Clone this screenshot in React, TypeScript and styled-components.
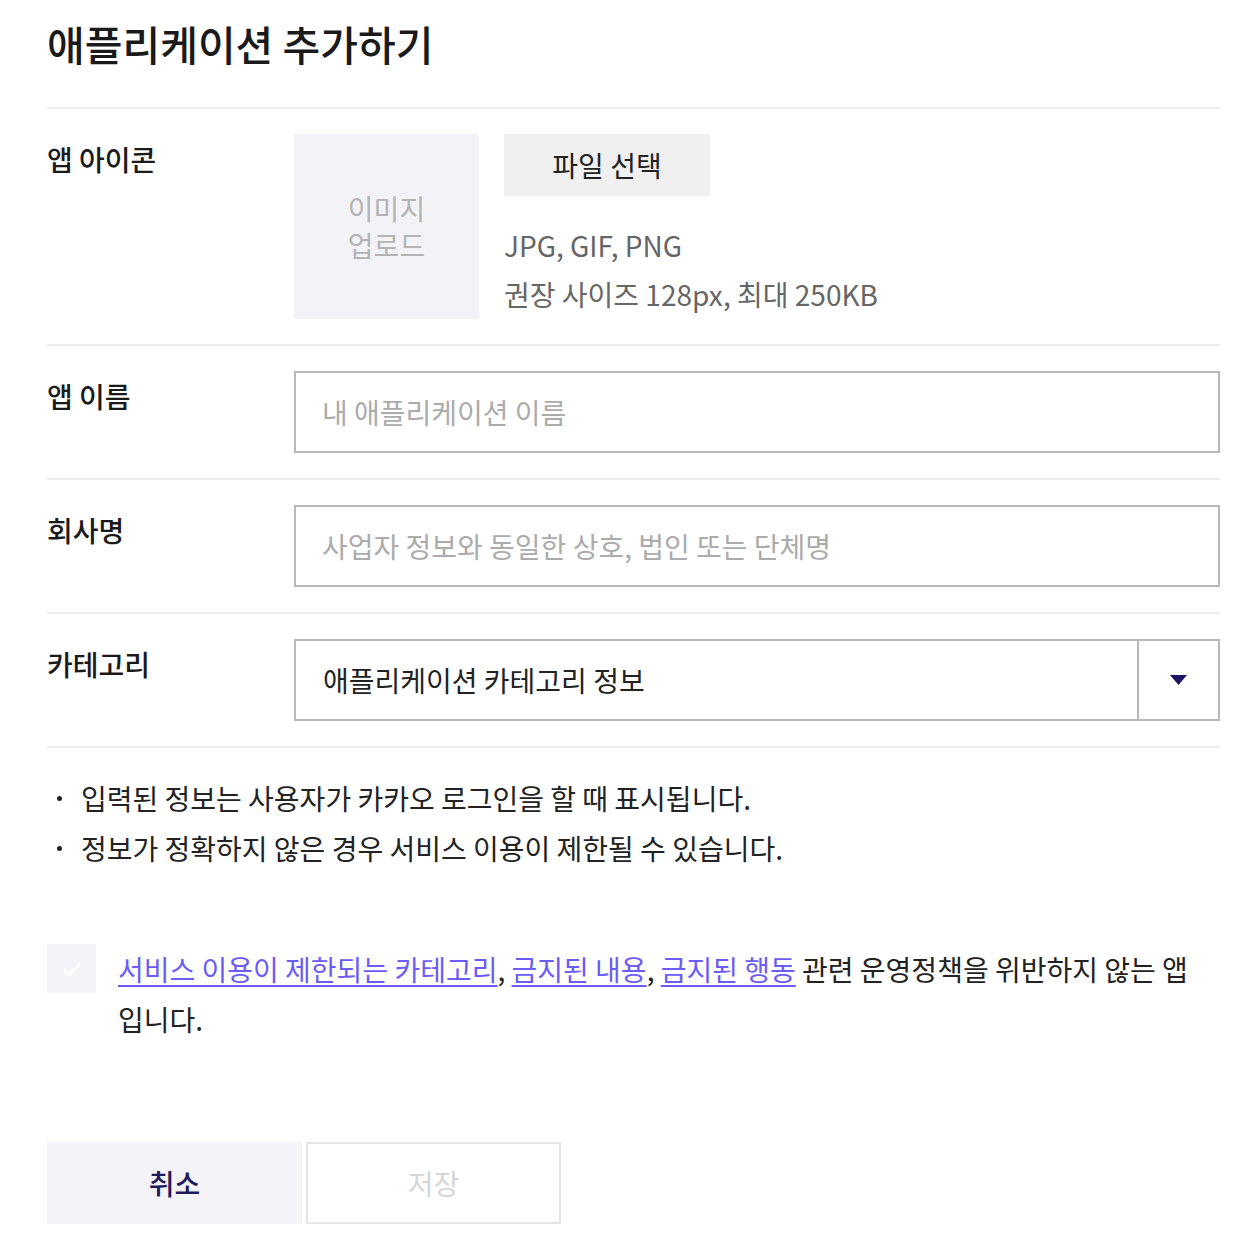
import * as React from 'react';
import styled, { createGlobalStyle } from 'styled-components';

const GlobalStyle = createGlobalStyle`
    body {
        margin: 0;
        background: #fff;
        font-family: "Noto Sans CJK KR", "Noto Sans", sans-serif;
        color: #222;
        word-break: keep-all;
    }
`;

const Page = styled.div`
    padding: 16px 25px 20px 47px;
`;

const Title = styled.h1`
    margin: 0 0 37px;
    font-size: 41px;
    line-height: 54px;
    font-weight: 500;
    color: #1a1a1a;
`;

const Row = styled.div`
    display: grid;
    grid-template-columns: 247px 1fr;
    border-top: 2px solid #ebebeb;
    padding: 25px 0;
`;

const Label = styled.div`
    font-size: 28px;
    line-height: 50px;
    font-weight: 500;
    color: #1a1a1a;
`;

const IconField = styled.div`
    display: flex;
    gap: 25px;
`;

const ImageBox = styled.div`
    width: 185px;
    height: 185px;
    background: #f3f3f7;
    color: #b3b3b3;
    font-size: 28px;
    line-height: 37px;
    display: flex;
    align-items: center;
    justify-content: center;
    text-align: center;
`;

const FileInfo = styled.div`
    display: flex;
    flex-direction: column;
    align-items: flex-start;
`;

const FileButton = styled.button`
    width: 206px;
    height: 62px;
    border: 0;
    background: #f0f0f0;
    font-family: inherit;
    font-size: 28px;
    color: #222;
    padding: 0;
`;

const Hint = styled.div`
    margin-top: 25px;
    font-size: 28px;
    line-height: 49px;
    color: #666;
`;

const TextInput = styled.input`
    box-sizing: border-box;
    width: 100%;
    height: 82px;
    border: 2px solid #b8b8b8;
    padding: 0 26px;
    font-family: inherit;
    font-size: 28px;
    color: #222;
    outline: none;
    &::placeholder {
        color: #ababab;
    }
`;

const Select = styled.div`
    box-sizing: border-box;
    display: flex;
    height: 82px;
    border: 2px solid #b8b8b8;
`;

const SelectValue = styled.div`
    flex: 1;
    display: flex;
    align-items: center;
    padding: 0 27px;
    font-size: 28px;
    color: #222;
`;

const SelectArrow = styled.div`
    width: 79px;
    border-left: 2px solid #b8b8b8;
    display: flex;
    align-items: center;
    justify-content: center;
`;

const Notes = styled.ul`
    margin: 0;
    padding: 25px 0 0;
    list-style: none;
    border-top: 2px solid #ebebeb;
`;

const Note = styled.li`
    position: relative;
    padding-left: 34px;
    font-size: 28px;
    line-height: 50px;
    color: #222;
    &::before {
        content: '';
        position: absolute;
        left: 10px;
        top: 23px;
        width: 5px;
        height: 5px;
        border-radius: 50%;
        background: #222;
    }
`;

const Agree = styled.div`
    display: flex;
    gap: 22px;
    margin-top: 71px;
`;

const CheckBox = styled.div`
    flex: none;
    width: 49px;
    height: 49px;
    background: #f3f3f8;
    display: flex;
    align-items: center;
    justify-content: center;
`;

const AgreeText = styled.p`
    margin: 0;
    font-size: 28px;
    line-height: 50px;
    color: #222;
`;

const PolicyLink = styled.a`
    color: #6b5cf6;
    text-decoration: underline;
    text-underline-offset: 4px;
`;

const Actions = styled.div`
    display: flex;
    gap: 4px;
    margin-top: 98px;
`;

const ActionButton = styled.button<{ $primary?: boolean }>`
    box-sizing: border-box;
    width: 255px;
    height: 82px;
    font-family: inherit;
    font-size: 28px;
    font-weight: ${p => (p.$primary ? 500 : 400)};
    background: ${p => (p.$primary ? '#f3f3f8' : '#fff')};
    color: ${p => (p.$primary ? '#1e1a5c' : '#d6d6d6')};
    border: ${p => (p.$primary ? '0' : '2px solid #e5e5e5')};
    padding: 0;
`;

const ArrowIcon = () => (
    <svg width="17" height="10" viewBox="0 0 17 10">
        <path d="M0 0 H17 L8.5 10 Z" fill="#1c1464" />
    </svg>
);

const CheckIcon = () => (
    <svg width="24" height="20" viewBox="0 0 24 20">
        <path d="M3 10 L9 16 L21 4" fill="none" stroke="#fff" strokeWidth="3.5" />
    </svg>
);

export default function App() {
    return (
        <Page>
            <GlobalStyle />
            <Title>애플리케이션 추가하기</Title>

            <Row>
                <Label>앱 아이콘</Label>
                <IconField>
                    <ImageBox>이미지<br />업로드</ImageBox>
                    <FileInfo>
                        <FileButton>파일 선택</FileButton>
                        <Hint>
                            JPG, GIF, PNG<br />
                            권장 사이즈 128px, 최대 250KB
                        </Hint>
                    </FileInfo>
                </IconField>
            </Row>

            <Row>
                <Label>앱 이름</Label>
                <TextInput placeholder="내 애플리케이션 이름" />
            </Row>

            <Row>
                <Label>회사명</Label>
                <TextInput placeholder="사업자 정보와 동일한 상호, 법인 또는 단체명" />
            </Row>

            <Row>
                <Label>카테고리</Label>
                <Select>
                    <SelectValue>애플리케이션 카테고리 정보</SelectValue>
                    <SelectArrow><ArrowIcon /></SelectArrow>
                </Select>
            </Row>

            <Notes>
                <Note>입력된 정보는 사용자가 카카오 로그인을 할 때 표시됩니다.</Note>
                <Note>정보가 정확하지 않은 경우 서비스 이용이 제한될 수 있습니다.</Note>
            </Notes>

            <Agree>
                <CheckBox><CheckIcon /></CheckBox>
                <AgreeText>
                    <PolicyLink href="#">서비스 이용이 제한되는 카테고리</PolicyLink>,{' '}
                    <PolicyLink href="#">금지된 내용</PolicyLink>,{' '}
                    <PolicyLink href="#">금지된 행동</PolicyLink> 관련 운영정책을 위반하지 않는 앱 입니다.
                </AgreeText>
            </Agree>

            <Actions>
                <ActionButton $primary>취소</ActionButton>
                <ActionButton>저장</ActionButton>
            </Actions>
        </Page>
    );
}
